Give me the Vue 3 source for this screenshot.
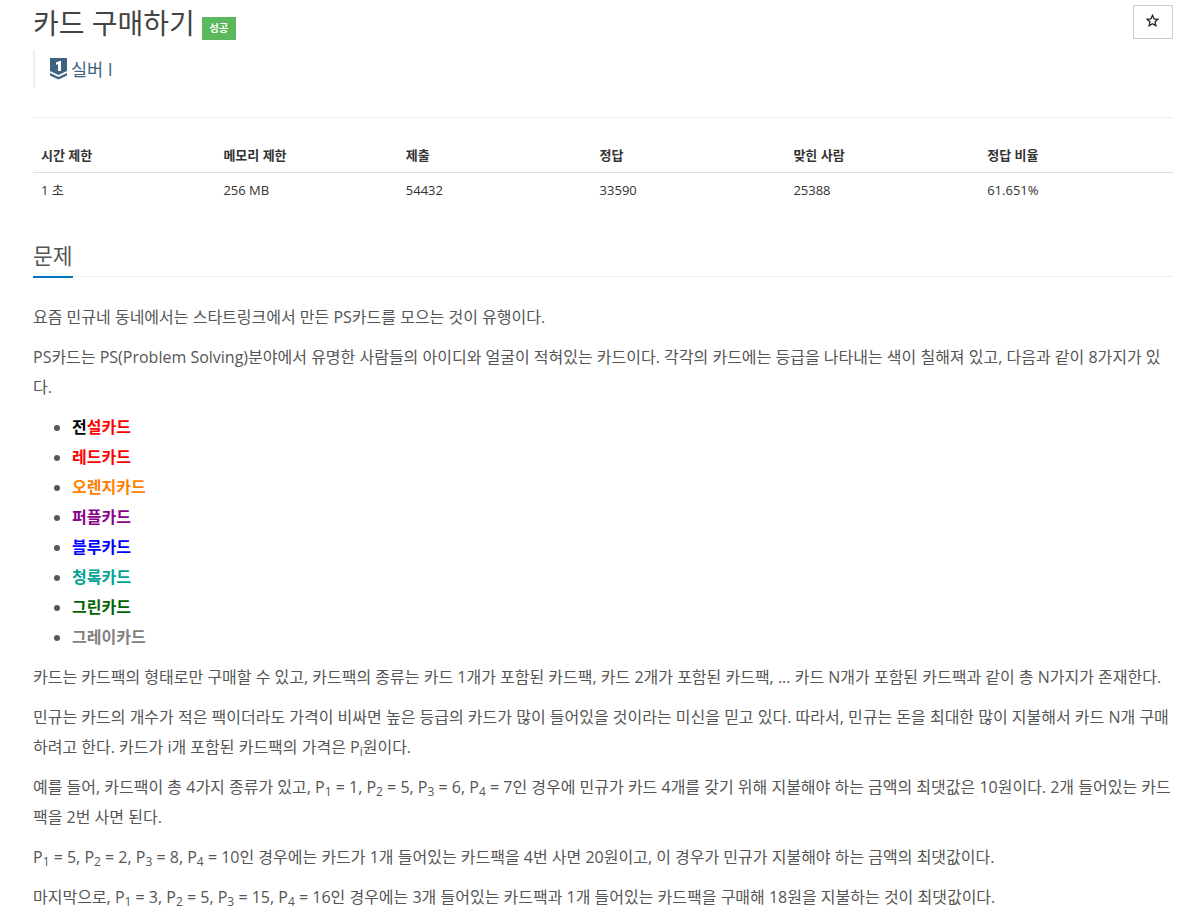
<script setup>
const heads = ['시간 제한', '메모리 제한', '제출', '정답', '맞힌 사람', '정답 비율']
const values = ['1 초', '256 MB', '54432', '33590', '25388', '61.651%']
const cards = [
  { name: '레드카드', color: '#ff0000' },
  { name: '오렌지카드', color: '#ff7f00' },
  { name: '퍼플카드', color: '#8b008b' },
  { name: '블루카드', color: '#0000ff' },
  { name: '청록카드', color: '#00a392' },
  { name: '그린카드', color: '#006400' },
  { name: '그레이카드', color: '#808080' },
]
</script>

<template>
  <div class="page">
    <div class="title-row">
      <h1 class="title">카드 구매하기</h1>
      <span class="badge">성공</span>
      <button class="star">
        <svg width="13" height="13" viewBox="0 0 24 24">
          <path d="M12 2.5L14.9 9L22 9.7L16.7 14.5L18.2 21.5L12 17.9L5.8 21.5L7.3 14.5L2 9.7L9.1 9Z" fill="none" stroke="#222" stroke-width="2.4" stroke-linejoin="miter" />
        </svg>
      </button>
    </div>
    <blockquote class="tier">
      <svg class="tier-icon" width="17" height="22" viewBox="0 0 17 22">
        <path d="M0 0H17V13L8.5 17L0 13Z" fill="#3f6283" />
        <path d="M0 15L8.5 19L17 15V17.5L8.5 21.5L0 17.5Z" fill="#3f6283" />
        <path d="M6 4.5L9.5 3H11V13H8V6L6 7Z" fill="#fff" />
      </svg>
      <span>실버 I</span>
    </blockquote>
    <div class="rule"></div>

    <table class="info">
      <thead>
        <tr><th v-for="h in heads" :key="h">{{ h }}</th></tr>
      </thead>
      <tbody>
        <tr><td v-for="v in values" :key="v">{{ v }}</td></tr>
      </tbody>
    </table>

    <div class="headline"><h2>문제</h2></div>

    <section class="desc">
      <p>요즘 민규네 동네에서는 스타트링크에서 만든 PS카드를 모으는 것이 유행이다.</p>
      <p>PS카드는 PS(Problem Solving)분야에서 유명한 사람들의 아이디와 얼굴이 적혀있는 카드이다. 각각의 카드에는 등급을 나타내는 색이 칠해져 있고, 다음과 같이 8가지가 있다.</p>
      <ul>
        <li><strong><span class="black">전</span><span class="red">설카드</span></strong></li>
        <li v-for="c in cards" :key="c.name"><strong :style="{ color: c.color }">{{ c.name }}</strong></li>
      </ul>
      <p>카드는 카드팩의 형태로만 구매할 수 있고, 카드팩의 종류는 카드 1개가 포함된 카드팩, 카드 2개가 포함된 카드팩, ... 카드 N개가 포함된 카드팩과 같이 총 N가지가 존재한다.</p>
      <p>민규는 카드의 개수가 적은 팩이더라도 가격이 비싸면 높은 등급의 카드가 많이 들어있을 것이라는 미신을 믿고 있다. 따라서, 민규는 돈을 최대한 많이 지불해서 카드 N개 구매하려고 한다. 카드가 i개 포함된 카드팩의 가격은 P<sub>i</sub>원이다.</p>
      <p>예를 들어, 카드팩이 총 4가지 종류가 있고, P<sub>1</sub> = 1, P<sub>2</sub> = 5, P<sub>3</sub> = 6, P<sub>4</sub> = 7인 경우에 민규가 카드 4개를 갖기 위해 지불해야 하는 금액의 최댓값은 10원이다. 2개 들어있는 카드팩을 2번 사면 된다.</p>
      <p>P<sub>1</sub> = 5, P<sub>2</sub> = 2, P<sub>3</sub> = 8, P<sub>4</sub> = 10인 경우에는 카드가 1개 들어있는 카드팩을 4번 사면 20원이고, 이 경우가 민규가 지불해야 하는 금액의 최댓값이다.</p>
      <p>마지막으로, P<sub>1</sub> = 3, P<sub>2</sub> = 5, P<sub>3</sub> = 15, P<sub>4</sub> = 16인 경우에는 3개 들어있는 카드팩과 1개 들어있는 카드팩을 구매해 18원을 지불하는 것이 최댓값이다.</p>
    </section>
  </div>
</template>

<style>
body {
  background: #fff;
  overflow: hidden;
}
</style>

<style scoped>
.page {
  width: 1140px;
  height: 910px;
  overflow: hidden;
  margin-left: 33px;
  font-family: "Open Sans", "Noto Sans CJK KR", sans-serif;
  font-size: 14px;
  color: #333;
}
.title-row {
  display: flex;
  align-items: flex-start;
  height: 50px;
}
.title {
  margin: 5px 0 0;
  font-size: 28px;
  line-height: 36px;
  font-weight: 400;
  color: #444;
}
.badge {
  margin: 17px 0 0 7px;
  background: #5cb85c;
  color: #fff;
  font-size: 10.5px;
  font-weight: 700;
  line-height: 23px;
  height: 23px;
  width: 34px;
  text-align: center;
}
.star {
  margin: 5px 0 0 auto;
  width: 40px;
  height: 34px;
  padding: 0 2px 3px 0;
  background: #fff;
  border: 1px solid #ccc;
  display: flex;
  align-items: center;
  justify-content: center;
}
.tier {
  margin: 0;
  height: 38px;
  border-left: 2px solid #eee;
  padding: 0 0 1px 15px;
  box-sizing: border-box;
  display: flex;
  align-items: center;
  gap: 4px;
  font-size: 17.5px;
  color: #3f6283;
}
.tier-icon {
  flex: none;
  margin-top: 1px;
}
.rule {
  margin-top: 29px;
  border-top: 1px solid #eee;
}
.info {
  margin-top: 19px;
  width: 100%;
  border-collapse: collapse;
  table-layout: fixed;
  font-size: 13px;
  color: #333;
}
.info th:nth-child(-n+2) {
  width: 16%;
}
.info th {
  text-align: left;
  font-weight: 700;
  padding: 8px;
  height: 35px;
  box-sizing: border-box;
  border-bottom: 1px solid #ddd;
}
.info td {
  padding: 7px 8px 9px;
  height: 35px;
  box-sizing: border-box;
}
.headline {
  margin-top: 27px;
  border-bottom: 1px dotted #e0e0e8;
  height: 41px;
}
.headline h2 {
  display: inline-block;
  margin: 0;
  height: 43px;
  box-sizing: border-box;
  border-bottom: 2px solid #0076c0;
  font-size: 21.5px;
  line-height: 41px;
  font-weight: 400;
  color: #555;
}
.desc {
  margin-top: 25px;
  font-size: 16px;
  line-height: 30px;
  color: #555;
}
.desc p {
  margin: 0 0 10px;
}
.desc ul {
  margin: 0 0 10px;
  padding-left: 39px;
}
.desc sub {
  font-size: 75%;
  line-height: 0;
  vertical-align: baseline;
  position: relative;
  bottom: -0.25em;
}
.black {
  color: #000;
}
.red {
  color: #ff0000;
}
</style>
